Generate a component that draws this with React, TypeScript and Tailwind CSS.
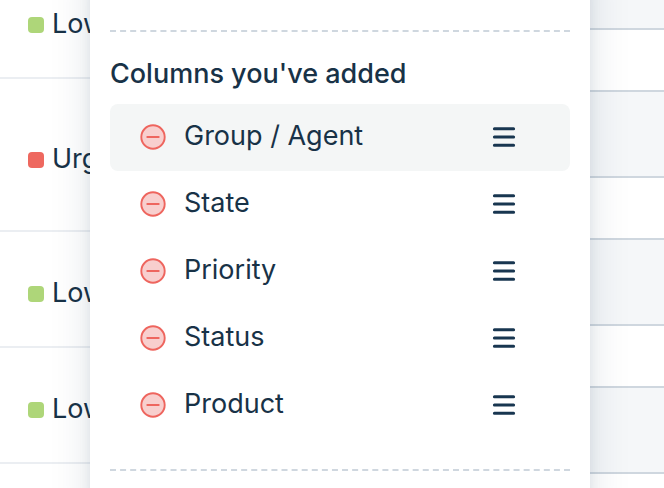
import clsx from 'clsx';

const tickets = [
  { id: 1, priority: 'Low', color: 'bg-[#aed679]', size: 'h-[116px]' },
  { id: 2, priority: 'Urgent', color: 'bg-[#ee685f]', size: 'h-[153px]' },
  { id: 3, priority: 'Low', color: 'bg-[#aed679]', size: 'h-[116px]' },
  { id: 4, priority: 'Low', color: 'bg-[#aed679]', size: 'h-[116px]' },
];

const columns = ['Group / Agent', 'State', 'Priority', 'Status', 'Product'];

function RemoveIcon() {
  return (
    <svg viewBox="0 0 26 26" className="size-[26px]" fill="none" aria-hidden="true">
      <circle cx="13" cy="13" r="11.7" fill="#f8cfce" stroke="#ee655e" strokeWidth="1.9" />
      <path d="M7.3 13h11.4" stroke="#ee655e" strokeWidth="2" strokeLinecap="round" />
    </svg>
  );
}

function DragIcon() {
  return (
    <svg viewBox="0 0 24 24" className="size-6" aria-hidden="true">
      <path
        d="M2.4 3.7h19.2M2.4 12h19.2M2.4 20.3h19.2"
        stroke="#183650"
        strokeWidth="3"
        strokeLinecap="round"
      />
    </svg>
  );
}

function TicketList() {
  return (
    <ul className="-mt-[37px] w-[90px] shrink-0">
      {tickets.map((ticket) => (
        <li
          key={ticket.id}
          className={clsx(
            'flex items-center border-b-2 border-[#ebeef2] pl-7 pt-[10px] whitespace-nowrap',
            ticket.size
          )}
        >
          <span className={clsx('size-4 shrink-0 rounded', ticket.color)} />
          <span className="pb-0.5 pl-2">{ticket.priority}</span>
        </li>
      ))}
    </ul>
  );
}

function ColumnRow({ name, active }: { name: string; active: boolean }) {
  return (
    <li className={clsx('flex h-[67px] items-center rounded-lg pr-[54px] pb-0.5 pl-[30px]', active && 'bg-[#f4f6f6]')}>
      <button type="button" aria-label={`Remove ${name}`} className="shrink-0">
        <RemoveIcon />
      </button>
      <span className="flex-1 pb-0.5 pl-[18px]">{name}</span>
      <button type="button" aria-label={`Reorder ${name}`} className="shrink-0 cursor-grab">
        <DragIcon />
      </button>
    </li>
  );
}

function ColumnsPanel() {
  return (
    <section className="relative z-10 -my-10 min-w-0 flex-1 bg-white px-5 pt-[70px] shadow-[0_0_40px_rgba(18,52,77,0.12),0_0_12px_rgba(18,52,77,0.08)]">
      <hr className="border-t-2 border-dashed border-[#cfd7df]" />
      <h2 className="pt-6 pb-3 leading-9 font-medium">Columns you've added</h2>
      <ul>
        {columns.map((name, i) => (
          <ColumnRow key={name} name={name} active={i === 0} />
        ))}
      </ul>
      <hr className="mt-[30px] border-t-2 border-dashed border-[#cfd7df]" />
    </section>
  );
}

function TableEdge() {
  return (
    <div className="w-[74px] shrink-0">
      <div className="h-[30px] border-b-2 border-[#cfd7df] bg-[#f5f7f9]" />
      {[1, 2, 3].map((n) => (
        <div key={n}>
          <div className="h-[62px] border-b-2 border-[#cfd7df]" />
          <div className="h-[86px] border-b-2 border-[#cfd7df] bg-[#f5f7f9]" />
        </div>
      ))}
    </div>
  );
}

export default function App() {
  return (
    <main className="flex h-screen overflow-hidden bg-white font-['Inter','Liberation_Sans',sans-serif] text-[27px] leading-8 text-[#183247]">
      <TicketList />
      <ColumnsPanel />
      <TableEdge />
    </main>
  );
}
